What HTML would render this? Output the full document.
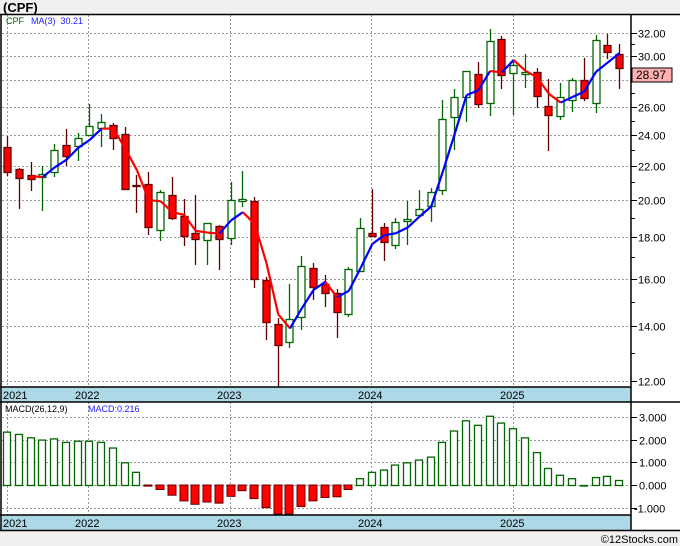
<!DOCTYPE html>
<html><head><meta charset="utf-8"><style>
body{margin:0;width:680px;height:546px;overflow:hidden;background:#f0f0f0;font-family:"Liberation Sans",sans-serif}
svg{display:block}
</style></head><body>
<svg id="s" width="680" height="546" xmlns="http://www.w3.org/2000/svg" font-family="Liberation Sans, sans-serif">
<rect x="0" y="0" width="680" height="546" fill="#f0f0f0"/>
<rect x="2" y="14" width="678" height="516" fill="#fff"/>
<text x="3" y="12" font-size="13" font-weight="bold" fill="#000">(CPF)</text>
<g id="grid" stroke="#999" stroke-width="1" stroke-dasharray="2,2"></g>
<g id="c"></g>
<rect x="2" y="387" width="629" height="15" fill="#add8e6"/>
<rect x="2" y="515" width="629" height="15" fill="#add8e6"/>
<g stroke="#000" stroke-width="1.5" fill="none">
<line x1="0" y1="14.5" x2="680" y2="14.5"/>
<line x1="1" y1="14" x2="1" y2="531"/>
<line x1="631" y1="14" x2="631" y2="531"/>
<line x1="0" y1="387" x2="631" y2="387"/>
<line x1="0" y1="402" x2="680" y2="402"/>
<line x1="0" y1="515" x2="631" y2="515"/>
<line x1="0" y1="530.5" x2="680" y2="530.5"/>
</g>
<g font-size="11" fill="#000">
<text x="3" y="399">2021</text><text x="75" y="399">2022</text><text x="217" y="399">2023</text><text x="358" y="399">2024</text><text x="500" y="399">2025</text>
<text x="3" y="527">2021</text><text x="75" y="527">2022</text><text x="217" y="527">2023</text><text x="358" y="527">2024</text><text x="500" y="527">2025</text>
</g>
<text x="6" y="24" font-size="9" fill="#060">CPF</text>
<text x="31" y="24" font-size="9" fill="#22f">MA(3)&#160; 30.21</text>
<text x="5" y="412" font-size="9" fill="#000">MACD(26,12,9)</text>
<text x="88" y="412" font-size="9" fill="#22f">MACD:0.216</text>
<g id="ax" font-size="11" fill="#000"></g>
<rect x="632" y="68" width="40" height="14" fill="#ffb0b0" stroke="#000"/>
<text x="636" y="79" font-size="12" fill="#000">28.97</text>
<text x="678" y="543" font-size="11" fill="#000" text-anchor="end">©12Stocks.com</text>
</svg>
<script>
var NS="http://www.w3.org/2000/svg";
function el(p,t,a){var e=document.createElementNS(NS,t);for(var k in a)e.setAttribute(k,a[k]);p.appendChild(e);return e;}
var g=document.getElementById('grid'),c=document.getElementById('c'),ax=document.getElementById('ax');
function py(p){return 33+(Math.log(32)-Math.log(p))*354.7;}
function yp(y){return 32*Math.exp(-(y-33)/354.7);}
[32,30,28,26,24,22,20,18,16,14,12].forEach(function(p){var y=Math.round(py(p))+.5;el(g,'line',{x1:2,y1:y,x2:631,y2:y});
el(ax,'line',{x1:631,y1:y,x2:637,y2:y,stroke:'#000'});if(p!=28){var t=el(ax,'text',{x:638,y:y+4});t.textContent=p.toFixed(2);}});
[31,29,27,25,23,21,19,17,15,13].forEach(function(p){var y=Math.round(py(p))+.5;el(ax,'line',{x1:631,y1:y,x2:635,y2:y,stroke:'#000'});});
[7.5,88.5,230.5,371.5,513.5].forEach(function(x){el(g,'line',{x1:x,y1:15,x2:x,y2:387});el(g,'line',{x1:x,y1:402,x2:x,y2:515});});
[[3,'3.000'],[2,'2.000'],[1,'1.000'],[0,'0.000'],[-1,'-1.000']].forEach(function(v){var y=Math.round(485-v[0]*22.7)+.5;
el(g,'line',{x1:2,y1:y,x2:631,y2:y});el(ax,'line',{x1:631,y1:y,x2:637,y2:y,stroke:'#000'});var t=el(ax,'text',{x:v[0]<0?634:639,y:y+4});t.textContent=v[1];});
// candles: [topBody,bottomBody,high,low,green]
var C=[[147,172,136,176,0],[169,178,168,209,0],[175,179,162,191,0],[174,177,166,211,1],[150,172,144,177,1],[145,156,129,166,0],[138,146,133,161,1],[126,135,104,135,1],[122,128,114,147,1],[125,138,123,150,0],[134,189,127,190,0],[185,186,175,213,0],[184,227,172,235,0],[192,230,190,241,1],[195,218,177,220,0],[216,236,199,246,0],[233,239,195,265,0],[223,240,223,265,1],[226,239,225,270,0],[200,238,182,245,1],[199,201,171,207,1],[201,279,197,288,0],[280,322,277,340,0],[324,345,318,387,0],[319,342,284,348,1],[266,317,256,330,1],[268,287,263,300,0],[284,293,275,307,0],[293,312,289,338,0],[269,314,267,317,1],[228,271,218,272,1],[233,236,189,237,0],[227,242,223,261,0],[222,245,218,249,1],[219,221,201,245,1],[209,215,190,217,1],[192,206,188,222,1],[119,190,100,195,1],[97,117,89,150,1],[71,97,71,122,1],[74,104,62,108,0],[41,103,29,116,1],[39,75,36,89,0],[65,73,60,115,1],[72,74,54,88,1],[72,96,68,108,0],[106,115,79,151,0],[97,116,83,120,1],[80,100,78,112,1],[80,98,58,101,0],[40,103,35,113,1],[45,52,34,59,0],[54,68,44,89,0]];
var closes=[];
C.forEach(function(d,i){var x=Math.round(7+i*11.77);var col=d[4]?'#060':'#600';
el(c,'line',{x1:x+.5,y1:d[2],x2:x+.5,y2:d[3],stroke:col,'stroke-width':1.3});
el(c,'rect',{x:x-3,y:d[0]+.5,width:7,height:Math.max(1,d[1]-d[0]),fill:d[4]?'#fff':'#f00',stroke:col,'stroke-width':1.3});
closes.push(yp(d[4]?d[0]:d[1]));});
var prev=null;
for(var i=2;i<C.length;i++){var m=(closes[i]+closes[i-1]+closes[i-2])/3;var pt=[7+i*11.77+.5,py(m)];
if(prev){el(c,'line',{x1:prev[0],y1:prev[1],x2:pt[0],y2:pt[1],stroke:pt[1]<prev[1]?'#00f':'#f00','stroke-width':2.2});}prev=pt;}
var M=[2.35,2.25,2.1,2.0,2.05,1.9,1.95,1.95,1.9,1.65,1.0,0.58,-0.05,-0.2,-0.45,-0.7,-0.85,-0.75,-0.8,-0.5,-0.25,-0.6,-1.0,-1.35,-1.35,-0.95,-0.7,-0.55,-0.52,-0.2,0.3,0.58,0.68,0.9,1.0,1.12,1.25,1.9,2.4,2.85,2.65,3.05,2.75,2.5,2.1,1.45,0.75,0.45,0.3,0.0,0.35,0.4,0.22];
M.forEach(function(v,i){var x=Math.round(7+i*11.77);var h=v*22.7;var y0=485;
if(v>=0){el(c,'rect',{x:x-3.5,y:y0-h+.5,width:7,height:Math.max(0.5,h),fill:'#fff',stroke:'#060','stroke-width':1.3});}
else{var hh=Math.min(-h,29);el(c,'rect',{x:x-4,y:y0,width:8,height:hh,fill:'#f00',stroke:'#600','stroke-width':1});}});
</script>
</body></html>
